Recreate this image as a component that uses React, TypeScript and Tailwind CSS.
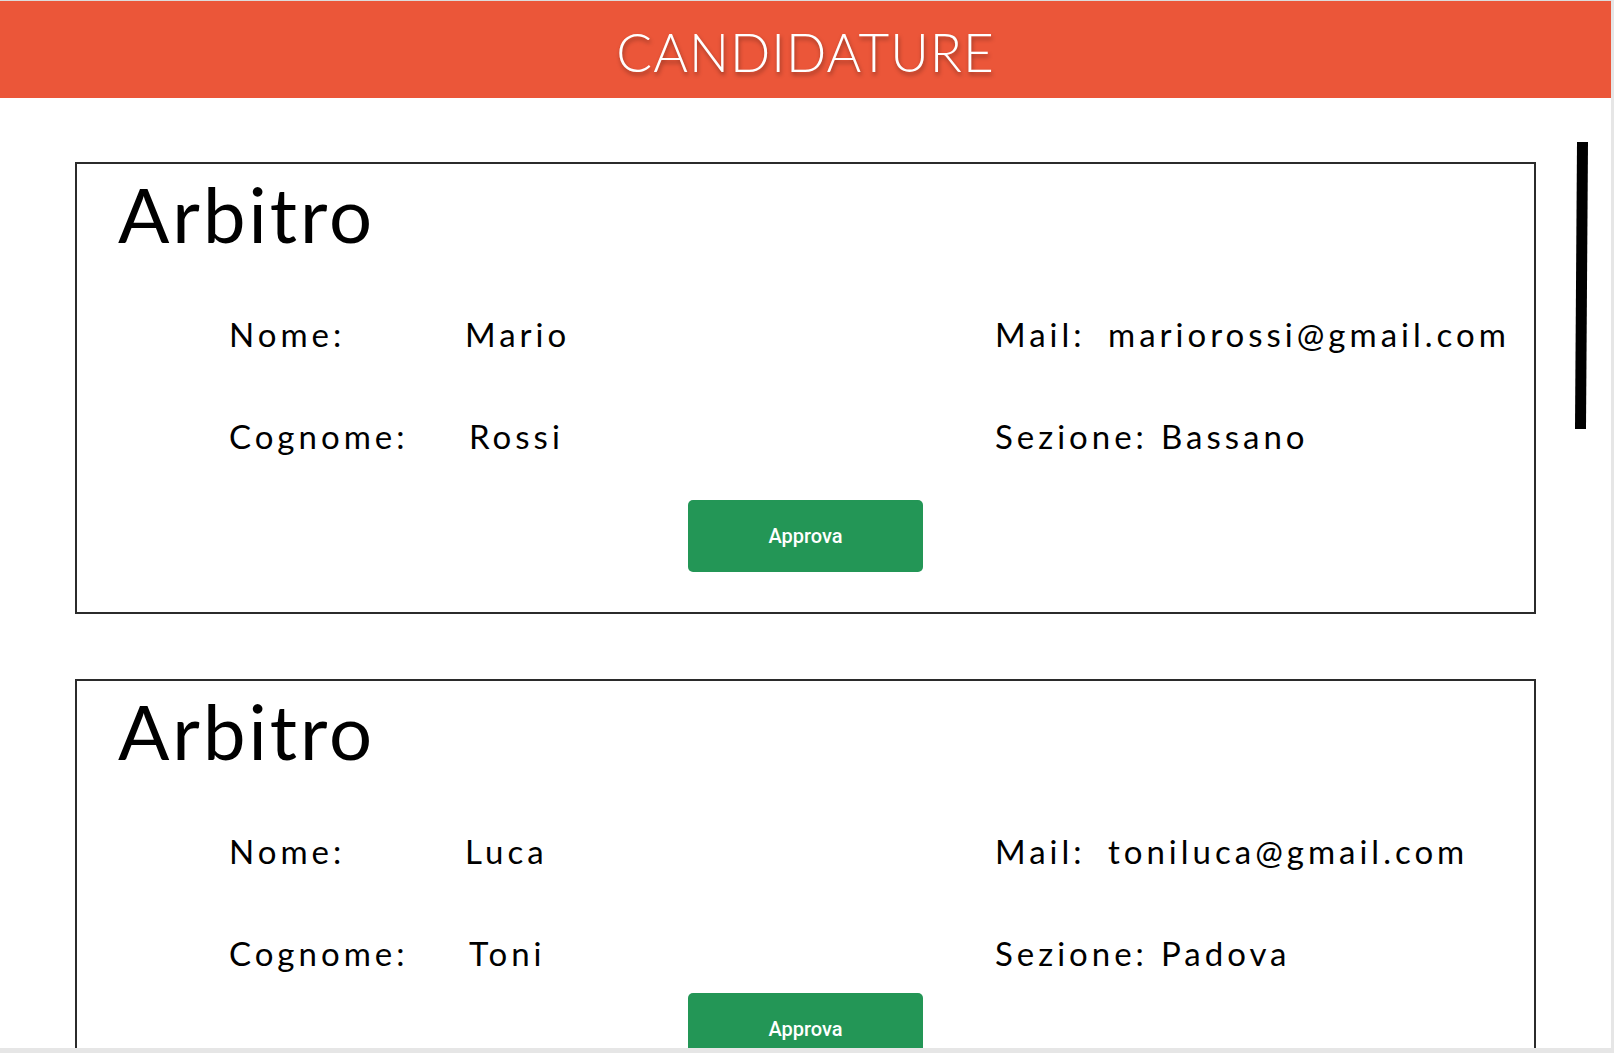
import React from 'react'

type Candidatura = {
  nome: string
  cognome: string
  mail: string
  sezione: string
}

const candidature: Candidatura[] = [
  { nome: 'Mario', cognome: 'Rossi', mail: 'mariorossi@gmail.com', sezione: 'Bassano' },
  { nome: 'Luca', cognome: 'Toni', mail: 'toniluca@gmail.com', sezione: 'Padova' },
]

function CardCandidatura({ c, compatta }: { c: Candidatura; compatta?: boolean }) {
  return (
    <div className="border-2 border-[#2b2b2b] pl-[41px] pt-[12px] pb-[40px]">
      <h2 className="text-[76px] leading-[76px] text-black font-normal tracking-[3px]">Arbitro</h2>

      {/* Righe dati */}
      <div className="pl-[111px] text-[33px] leading-[40px] text-black tracking-[4px]">
        <div className="flex mt-[62px]">
          <div className="w-[766px] flex">
            <span className="w-[236px]">Nome:</span>
            <span>{c.nome}</span>
          </div>
          <div className="flex">
            <span className="w-[113px]">Mail:</span>
            <span>{c.mail}</span>
          </div>
        </div>
        <div className="flex mt-[62px]">
          <div className="w-[766px] flex">
            <span className="w-[240px]">Cognome:</span>
            <span>{c.cognome}</span>
          </div>
          <div className="flex">
            <span className="w-[166px]">Sezione:</span>
            <span>{c.sezione}</span>
          </div>
        </div>
      </div>

      <div className={`flex justify-center pr-[41px] ${compatta ? 'mt-[20px]' : 'mt-[44px]'}`}>
        <button className="w-[235px] h-[72px] rounded-[5px] bg-[#239656] text-white text-[20px] font-medium font-['Roboto',sans-serif]">
          Approva
        </button>
      </div>
    </div>
  )
}

export default function App() {
  return (
    <div className="h-[1053px] w-full overflow-hidden flex flex-col bg-white font-['Lato','Noto_Sans',sans-serif]">
      <div className="flex flex-1 min-h-0">
        <div className="relative flex-1 min-w-0 flex flex-col overflow-hidden">
          {/* Header */}
          <header className="h-[98px] shrink-0 border-t border-[#dcdcdc] bg-[#eb5639] flex items-center justify-center pt-[3px]">
            <h1 className="text-white text-[53px] font-light leading-none tracking-[1px] [text-shadow:1px_3px_4px_rgba(0,0,0,0.35)]">
              CANDIDATURE
            </h1>
          </header>

          {/* Lista candidature */}
          <main className="flex flex-col gap-[65px] px-[75px] pt-[64px]">
            {candidature.map((c, i) => (
              <CardCandidatura key={c.mail} c={c} compatta={i > 0} />
            ))}
          </main>

          {/* Barra di scorrimento */}
          <div className="absolute top-[142px] right-[24px] w-[11px] h-[287px] bg-black rotate-[0.4deg]" />
        </div>
        <div className="w-[3px] bg-[#e6e6e6]" />
      </div>
      <div className="h-[5px] shrink-0 bg-[#e6e6e6]" />
    </div>
  )
}
